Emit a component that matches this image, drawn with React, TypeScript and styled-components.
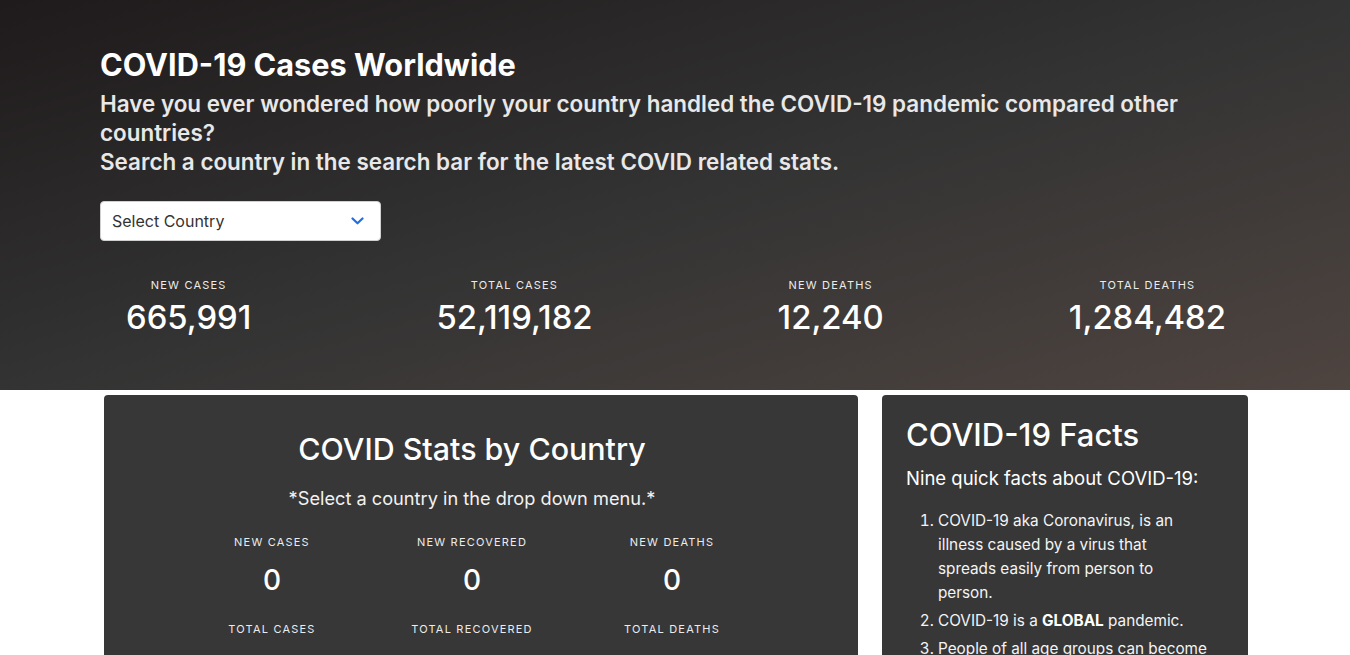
import React from "react";
import styled, { createGlobalStyle } from "styled-components";

const Global = createGlobalStyle`
  html, body { margin: 0; padding: 0; background: #ffffff; }
  body { font-family: Inter, "Noto Sans", "DejaVu Sans", sans-serif; color: #fff; }
  * { box-sizing: border-box; }
`;

const Hero = styled.header`
  height: 390px;
  background: linear-gradient(to bottom right, #1f1a1b 0%, #333333 50%, #4e4440 100%);
  padding: 47px 0 0;
`;

const HeroInner = styled.div`
  width: 1150px;
  margin: 0 auto;
`;

const Title = styled.h1`
  margin: 0 0 6px;
  font-size: 30.7px;
  line-height: 36px;
  font-weight: 700;
  color: #ffffff;
`;

const Lead = styled.h3`
  margin: 0;
  font-size: 22.45px;
  line-height: 29px;
  font-weight: 600;
  color: #e8e8e8;
`;

const SelectBox = styled.div`
  margin-top: 25px;
  width: 281px;
  height: 40px;
  background: #ffffff;
  border-radius: 4px;
  border: 1px solid #d0d0d0;
  display: flex;
  align-items: center;
  justify-content: space-between;
  padding: 0 16px 0 11px;
  font-size: 16px;
  color: #333333;
`;

const GlobalStats = styled.div`
  margin-top: 36px;
  display: flex;
  justify-content: space-between;
`;

const StatItem = styled.div`
  padding: 0 24px 0 26px;
  display: flex;
  flex-direction: column;
  align-items: center;
  gap: 5px;
`;

const StatLabel = styled.div`
  font-size: 11px;
  line-height: 16px;
  letter-spacing: 1.2px;
  text-transform: uppercase;
  color: #ececec;
`;

const StatValue = styled.div<{ $size: number }>`
  font-size: ${(p) => p.$size}px;
  line-height: ${(p) => Math.round(p.$size * 1.2)}px;
  font-weight: 500;
  color: #ffffff;
`;

const Cards = styled.main`
  display: grid;
  grid-template-columns: 754px 366px;
  gap: 24px;
  justify-content: center;
  padding: 5px 0 0 2px;
`;

const Card = styled.section<{ $top: number; $right: number }>`
  background: #373737;
  border-radius: 4px;
  padding: ${(p) => p.$top}px ${(p) => p.$right}px 24px 24px;
  min-height: 300px;
`;

const StatsHeading = styled.h2`
  margin: 12px 0 0;
  text-align: center;
  font-size: 30.4px;
  line-height: 36px;
  font-weight: 500;
`;

const Hint = styled.p`
  margin: 19px 0 0;
  text-align: center;
  font-size: 18.2px;
  line-height: 24px;
  color: #f2f2f2;
`;

const CountryGrid = styled.div`
  margin: 24px auto 0;
  width: 600px;
  display: grid;
  grid-template-columns: repeat(3, 1fr);
  row-gap: 24px;
`;

const Cell = styled.div`
  display: flex;
  flex-direction: column;
  align-items: center;
  gap: 13px;
`;

const FactsHeading = styled.h2`
  margin: 0;
  font-size: 31px;
  line-height: 34px;
  font-weight: 500;
`;

const FactsLead = styled.p`
  margin: 13px 0 0;
  font-size: 18.5px;
  line-height: 26px;
`;

const FactList = styled.ol`
  margin: 18px 0 0;
  padding-left: 32px;
  font-size: 15.3px;
  line-height: 24px;
  color: #f4f4f4;
  li { margin-bottom: 4px; }
  b { font-weight: 700; color: #fff; }
`;

const Chevron = () => (
  <svg width="13" height="8" viewBox="0 0 13 8" fill="none">
    <path d="M1.5 1.5 L6.5 6.3 L11.5 1.5" stroke="#1f6fe0" strokeWidth="2.2" strokeLinecap="round" strokeLinejoin="round" />
  </svg>
);

const heroStats = [
  ["New Cases", "665,991"],
  ["Total Cases", "52,119,182"],
  ["New Deaths", "12,240"],
  ["Total Deaths", "1,284,482"],
];

const countryStats = [
  ["New Cases", "0"],
  ["New Recovered", "0"],
  ["New Deaths", "0"],
  ["Total Cases", ""],
  ["Total Recovered", ""],
  ["Total Deaths", ""],
];

export default function App() {
  return (
    <>
      <Global />
      <Hero>
        <HeroInner>
          <Title>COVID-19 Cases Worldwide</Title>
          <Lead>
            Have you ever wondered how poorly your country handled the COVID-19 pandemic compared other countries?
            <br />
            Search a country in the search bar for the latest COVID related stats.
          </Lead>
          <SelectBox>
            <span>Select Country</span>
            <Chevron />
          </SelectBox>
          <GlobalStats>
            {heroStats.map(([l, v]) => (
              <StatItem key={l}>
                <StatLabel>{l}</StatLabel>
                <StatValue $size={32.8}>{v}</StatValue>
              </StatItem>
            ))}
          </GlobalStats>
        </HeroInner>
      </Hero>
      <Cards>
        <Card $top={24} $right={42}>
          <StatsHeading>COVID Stats by Country</StatsHeading>
          <Hint>*Select a country in the drop down menu.*</Hint>
          <CountryGrid>
            {countryStats.map(([l, v]) => (
              <Cell key={l}>
                <StatLabel>{l}</StatLabel>
                {v && <StatValue $size={28}>{v}</StatValue>}
              </Cell>
            ))}
          </CountryGrid>
        </Card>
        <Card $top={23} $right={36}>
          <FactsHeading>COVID-19 Facts</FactsHeading>
          <FactsLead>Nine quick facts about COVID-19:</FactsLead>
          <FactList>
            <li>
              COVID-19 aka Coronavirus, is an illness caused by a virus that
              <br />
              spreads easily from person to
              <br />
              person.
            </li>
            <li>
              COVID-19 is a <b>GLOBAL</b> pandemic.
            </li>
            <li>People of all age groups can become infected with the virus.</li>
            <li>Older people and those with underlying conditions are at higher risk.</li>
          </FactList>
        </Card>
      </Cards>
    </>
  );
}
